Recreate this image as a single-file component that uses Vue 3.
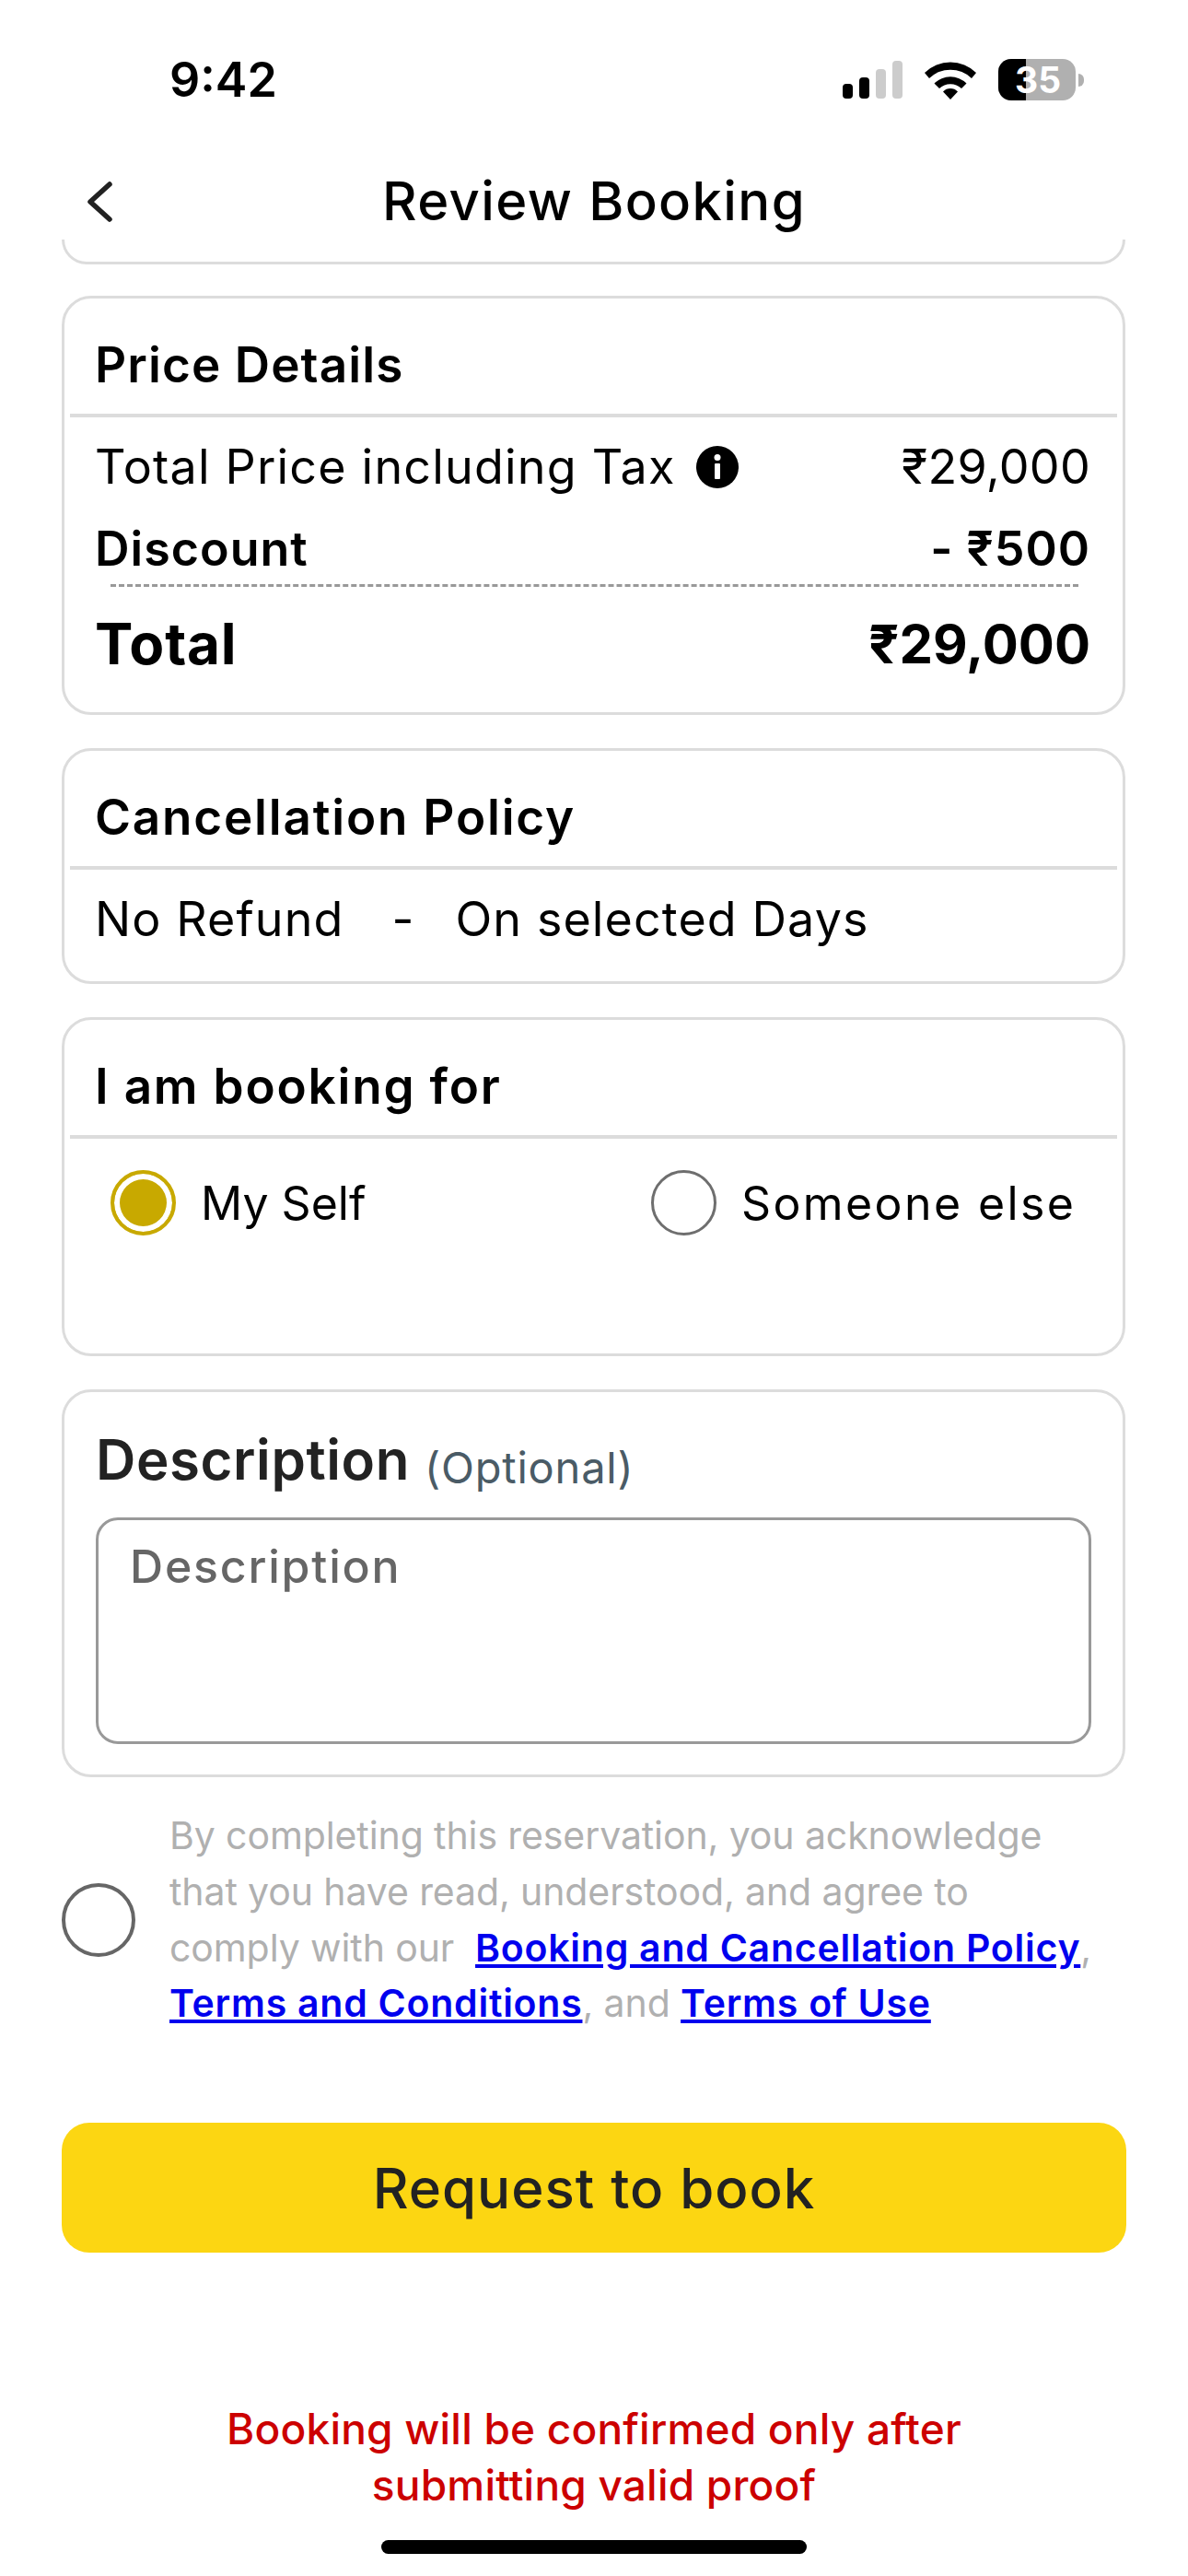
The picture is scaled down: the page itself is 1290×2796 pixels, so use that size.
<template>
  <div class="screen">
    <div class="status-bar">
      <span class="time">9:42</span>
      <div class="status-icons">
        <svg class="signal" width="65" height="41" viewBox="0 0 65 41">
          <rect x="0" y="25" width="11" height="16" rx="4" fill="#000" />
          <rect x="18" y="18" width="11" height="23" rx="4" fill="#000" />
          <rect x="36" y="9" width="11" height="32" rx="4" fill="#ccc" />
          <rect x="54" y="0" width="11" height="41" rx="4" fill="#ccc" />
        </svg>
        <svg class="wifi" width="58" height="43" viewBox="0 0 58 43">
          <path d="M1 14 A40 40 0 0 1 57 14 L52 20 A33 33 0 0 0 6 20 Z" fill="#000" />
          <path d="M11.500 25.500 A25 25 0 0 1 46.500 25.500 L41 31 A17.500 17.500 0 0 0 17 31 Z" fill="#000" />
          <path d="M21 34.500 A11 11 0 0 1 37 34.500 L29 43 Z" fill="#000" />
        </svg>
        <div class="battery">
          <div class="battery-fill"></div>
          <span class="battery-text">35</span>
        </div>
        <div class="battery-nub"></div>
      </div>
    </div>

    <div class="header">
      <svg class="back" width="32" height="46" viewBox="0 0 32 46">
        <path d="M26 4 L5 23 L26 42" fill="none" stroke="#222" stroke-width="5.500" stroke-linecap="round" stroke-linejoin="round" />
      </svg>
      <h1 class="header-title">Review Booking</h1>
    </div>

    <div class="content">
      <div class="card card-cut"></div>

      <section class="card">
        <h2 class="card-title title-tight">Price Details</h2>
        <div class="divider"></div>
        <div class="price-body">
          <div class="row row-regular">
            <span class="row-label">
              Total Price including Tax
              <svg class="info" width="46" height="46" viewBox="0 0 46 46">
                <circle cx="23" cy="23" r="23" fill="#000" />
                <circle cx="23" cy="12.500" r="3.500" fill="#fff" />
                <rect x="20" y="19" width="6" height="17" rx="1" fill="#fff" />
              </svg>
            </span>
            <span class="amount">₹29,000</span>
          </div>
          <div class="row row-discount">
            <span>Discount</span>
            <span class="amount">- ₹500</span>
          </div>
          <div class="dash"></div>
          <div class="row row-total">
            <span>Total</span>
            <span class="amount">₹29,000</span>
          </div>
        </div>
      </section>

      <section class="card">
        <h2 class="card-title">Cancellation Policy</h2>
        <div class="divider"></div>
        <div class="policy">
          <span>No Refund</span>
          <span class="policy-dash">-</span>
          <span>On selected Days</span>
        </div>
      </section>

      <section class="card">
        <h2 class="card-title">I am booking for</h2>
        <div class="divider"></div>
        <div class="radios">
          <label v-for="opt in options" :key="opt" class="radio" @click="who = opt">
            <span class="radio-dot" :class="{ checked: who === opt }"></span>
            <span>{{ opt }}</span>
          </label>
        </div>
      </section>

      <section class="card desc-card">
        <div class="desc-head">
          <span class="desc-title">Description</span>
          <span class="desc-optional">(Optional)</span>
        </div>
        <textarea v-model="description" class="desc-input" placeholder="Description"></textarea>
      </section>

      <div class="agree">
        <span class="agree-check"></span>
        <p class="agree-text">
          By completing this reservation, you acknowledge<br />
          that you have read, understood, and agree to<br />
          comply with our &nbsp;<a href="#" class="link">Booking and Cancellation Policy</a>,<br />
          <a href="#" class="link">Terms and Conditions</a>, and <a href="#" class="link">Terms of Use</a>
        </p>
      </div>

      <button class="book-btn">Request to book</button>

      <p class="notice">Booking will be confirmed only after<br />submitting valid proof</p>
    </div>

    <div class="home-bar"></div>
  </div>
</template>

<script setup>
import { ref } from 'vue';

const options = ['My Self', 'Someone else'];
const who = ref('My Self');
const description = ref('');
</script>

<style>
html,
body {
  margin: 0;
  background: #fff;
}
</style>

<style scoped>
.screen {
  position: relative;
  width: 1290px;
  height: 2796px;
  overflow: hidden;
  background: #fff;
  font-family: Inter, "Liberation Sans", sans-serif;
  color: #000;
}
.status-bar {
  height: 176px;
  box-sizing: border-box;
  padding: 56px 113px 0 184px;
  display: flex;
  justify-content: space-between;
  align-items: flex-start;
}
.time {
  font-size: 52px;
  line-height: 62px;
  font-weight: 600;
}
.status-icons {
  display: flex;
  align-items: flex-start;
  margin-top: 8px;
}
.signal {
  margin-top: 2px;
  margin-right: 23px;
}
.wifi {
  margin-top: 1px;
  margin-right: 23px;
}
.battery {
  position: relative;
  width: 84px;
  height: 45px;
  border-radius: 14px;
  background: #b0b0b0;
  overflow: hidden;
}
.battery-fill {
  width: 30px;
  height: 100%;
  background: #000;
}
.battery-text {
  position: absolute;
  top: 0;
  left: 18px;
  font-size: 39px;
  line-height: 45px;
  font-weight: 700;
  color: #fff;
}
.battery-nub {
  width: 6px;
  height: 14px;
  margin: 16px 0 0 3px;
  border-radius: 0 6px 6px 0;
  background: #b0b0b0;
}
.header {
  position: relative;
  height: 84px;
  display: flex;
  justify-content: center;
  align-items: center;
}
.back {
  position: absolute;
  left: 93px;
  top: 20px;
}
.header-title {
  margin: 0;
  font-size: 58px;
  line-height: 84px;
  font-weight: 500;
  letter-spacing: 1.4px;
}
.content {
  padding: 0 67px;
  display: flex;
  flex-direction: column;
}
.card {
  box-sizing: border-box;
  width: 1155px;
  margin-bottom: 36px;
  border: 3px solid #dcdcdc;
  border-radius: 32px;
  background: #fff;
}
.card-cut {
  height: 27px;
  margin-bottom: 34px;
  border-top: 0;
  border-radius: 0 0 32px 32px;
}
.card-title {
  margin: 0;
  height: 125px;
  box-sizing: border-box;
  padding: 42px 0 0 33px;
  font-size: 53px;
  line-height: 60px;
  font-weight: 600;
  letter-spacing: 1.8px;
}
.title-tight {
  letter-spacing: 1.1px;
}
.divider {
  height: 4px;
  margin: 0 6px;
  background: #dcdcdc;
}
.price-body {
  padding: 0 35px 0 33px;
  height: 320px;
  box-sizing: border-box;
}
.row {
  display: flex;
  justify-content: space-between;
  align-items: center;
}
.row-label {
  display: flex;
  align-items: center;
}
.row-regular {
  padding-top: 24px;
  font-size: 52px;
  line-height: 60px;
  letter-spacing: 1.2px;
}
.row-regular .amount {
  letter-spacing: 0.3px;
}
.info {
  margin-left: 22px;
}
.row-discount {
  margin-top: 29px;
  font-size: 52px;
  line-height: 60px;
  font-weight: 600;
  letter-spacing: 1px;
}
.dash {
  margin: 8px 0 0 17px;
  width: 1051px;
  border-top: 3px dashed #999;
}
.row-total {
  margin-top: 27px;
  font-size: 62px;
  line-height: 70px;
  font-weight: 700;
  letter-spacing: 0.8px;
}
.row-total .amount {
  font-size: 58px;
  letter-spacing: 0;
}
.policy {
  padding: 24px 33px 0;
  height: 121px;
  box-sizing: border-box;
  display: flex;
  font-size: 52px;
  line-height: 60px;
  letter-spacing: 1.1px;
}
.policy-dash {
  margin: 0 44px 0 52px;
}
.radios {
  display: flex;
  padding: 33px 0 0 50px;
  height: 233px;
  box-sizing: border-box;
}
.radio {
  flex: none;
  display: flex;
  align-items: center;
  height: 71px;
  gap: 27px;
  width: 587px;
  padding-top: 1px;
  font-size: 50px;
  letter-spacing: 0;
}
.radio:last-child {
  letter-spacing: 2.400px;
}
.radio-dot {
  flex: none;
  width: 71px;
  height: 71px;
  box-sizing: border-box;
  border: 3px solid #6e6e6e;
  border-radius: 50%;
}
.radio-dot.checked {
  border: 4px solid #c8a900;
  background: #c8a900;
  box-shadow: inset 0 0 0 6px #fff;
}
.desc-card {
  height: 421px;
  padding: 0 34px;
  margin-bottom: 0;
}
.desc-head {
  height: 136px;
  box-sizing: border-box;
  padding-top: 38px;
  display: flex;
  align-items: baseline;
  gap: 16px;
}
.desc-title {
  font-size: 60px;
  line-height: 70px;
  font-weight: 600;
  letter-spacing: 0.6px;
  color: #222;
}
.desc-optional {
  font-size: 47px;
  color: #4a5b66;
  letter-spacing: 0.8px;
  position: relative;
  top: 4px;
}
.desc-input {
  display: block;
  width: 100%;
  height: 246px;
  box-sizing: border-box;
  padding: 20px 34px;
  border: 3px solid #999;
  border-radius: 24px;
  outline: none;
  resize: none;
  background: #fff;
  font-family: Inter, "Liberation Sans", sans-serif;
  font-size: 50px;
  line-height: 60px;
  font-weight: 500;
  letter-spacing: 1.8px;
}
.desc-input::placeholder {
  color: #666;
  opacity: 1;
}
.agree {
  display: flex;
  align-items: center;
  margin-top: 33px;
  gap: 37px;
}
.agree-check {
  flex: none;
  width: 80px;
  height: 80px;
  box-sizing: border-box;
  border: 4px solid #666;
  border-radius: 50%;
}
.agree-text {
  margin: 0;
  font-size: 41px;
  line-height: 60.800px;
  letter-spacing: -0.1px;
  color: #b0b0b0;
  white-space: nowrap;
}
.link {
  color: #0000ee;
  font-weight: 600;
  letter-spacing: 0.75px;
  text-decoration: underline;
}
.book-btn {
  display: block;
  width: 1156px;
  height: 141px;
  margin-top: 99px;
  border: 0;
  border-radius: 30px;
  background: #fcd612;
  color: #222;
  font-family: Inter, "Liberation Sans", sans-serif;
  font-size: 60px;
  font-weight: 500;
  letter-spacing: 1px;
}
.notice {
  margin: 161px 0 0;
  text-align: center;
  font-size: 46px;
  line-height: 61px;
  font-weight: 500;
  letter-spacing: 0.2px;
  color: #cc0000;
}
.home-bar {
  position: absolute;
  left: 414px;
  top: 2757px;
  width: 462px;
  height: 15px;
  border-radius: 8px;
  background: #000;
}
</style>
